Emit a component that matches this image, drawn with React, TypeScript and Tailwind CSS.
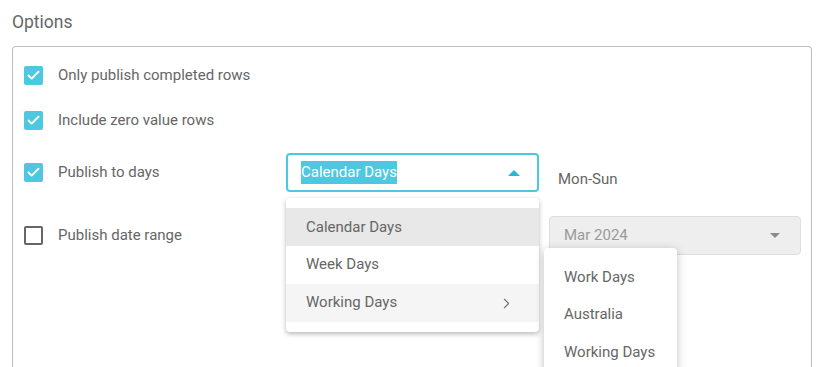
import { Check, ChevronRight } from 'lucide-react';

const CYAN = 'bg-[#4dc8e0]';

function Checkbox({ checked }: { checked: boolean }) {
  if (checked) {
    return (
      <span className={`flex h-[19px] w-[19px] shrink-0 items-center justify-center rounded-[2px] ${CYAN}`}>
        <Check size={15} strokeWidth={3} className="text-white" />
      </span>
    );
  }
  return <span className="h-[19px] w-[19px] shrink-0 rounded-[2px] border-2 border-[#666]" />;
}

function Caret({ up, color }: { up?: boolean; color: string }) {
  return (
    <svg width="12" height="6" viewBox="0 0 12 6" className={color}>
      <path d={up ? 'M0 6 L6 0 L12 6 Z' : 'M1 0 L11 0 L6 5 Z'} fill="currentColor" />
    </svg>
  );
}

const days = ['Calendar Days', 'Week Days', 'Working Days'];
const working = ['Work Days', 'Australia', 'Working Days'];

export default function App() {
  return (
    <div className="h-[367px] w-[827px] overflow-hidden bg-white pl-3 pr-[15px] pt-[10px] font-['Roboto',sans-serif] text-[15px] text-[#666]">
      <div className="text-[17.5px] leading-[24px] text-[#666]">Options</div>

      <div className="mt-[12px] h-[340px] rounded-t-[4px] border border-b-0 border-[#bdbdbd] pl-[11px] pr-[9px] pt-[9px]">
        <div className="flex h-[38px] items-center gap-[15px]">
          <Checkbox checked />
          <span>Only publish completed rows</span>
        </div>

        <div className="mt-[7px] flex h-[38px] items-center gap-[15px]">
          <Checkbox checked />
          <span>Include zero value rows</span>
        </div>

        <div className="relative z-10 mt-[14px] flex h-[39px] items-center">
          <div className="flex w-[262px] items-center gap-[15px]">
            <Checkbox checked />
            <span>Publish to days</span>
          </div>
          <div className="relative">
            <div className="flex h-[39px] w-[253px] items-center justify-between rounded-[4px] border-2 border-[#4dc8e0] pl-[13px] pr-[17px]">
              <span className={`${CYAN} text-white`}>Calendar Days</span>
              <Caret up color="text-[#29b6d4]" />
            </div>

            <div className="absolute left-0 top-[45px] w-[253px] rounded-[4px] bg-white py-[10px] shadow-[0_2px_5px_rgba(0,0,0,0.28)]">
              {days.map((d, i) => (
                <div
                  key={d}
                  className={`flex h-[38px] items-center justify-between pl-5 pr-[24px] ${i === 0 ? 'bg-[#e8e8e8]' : i === 2 ? 'bg-[#f5f5f5]' : ''}`}
                >
                  <span className={i === 0 ? '' : '-mt-[2px]'}>{d}</span>
                  {i === 2 && <ChevronRight size={17} strokeWidth={1.6} className="text-[#777]" />}
                </div>
              ))}

              <div className="absolute left-[258px] top-[50px] w-[133px] rounded-[4px] bg-white pt-[10px] pb-[10px] shadow-[0_2px_8px_rgba(0,0,0,0.25)]">
                {working.map((w) => (
                  <div key={w} className="flex h-[37.5px] items-center pl-5">
                    {w}
                  </div>
                ))}
              </div>
            </div>
          </div>
          <span className="ml-[19px] pt-[13px]">Mon-Sun</span>
        </div>

        <div className="mt-[24px] flex h-[39px] items-center">
          <div className="flex w-[262px] items-center gap-[15px]">
            <Checkbox checked={false} />
            <span>Publish date range</span>
          </div>
          <div className="ml-[263px] flex h-[39px] w-[252px] items-center justify-between rounded-[4px] border border-[#dedede] bg-[#eeeeee] pl-[14px] pr-[19px] text-[#9a9a9a]">
            <span>Mar 2024</span>
            <Caret color="text-[#8a8a8a]" />
          </div>
        </div>
      </div>
    </div>
  );
}
